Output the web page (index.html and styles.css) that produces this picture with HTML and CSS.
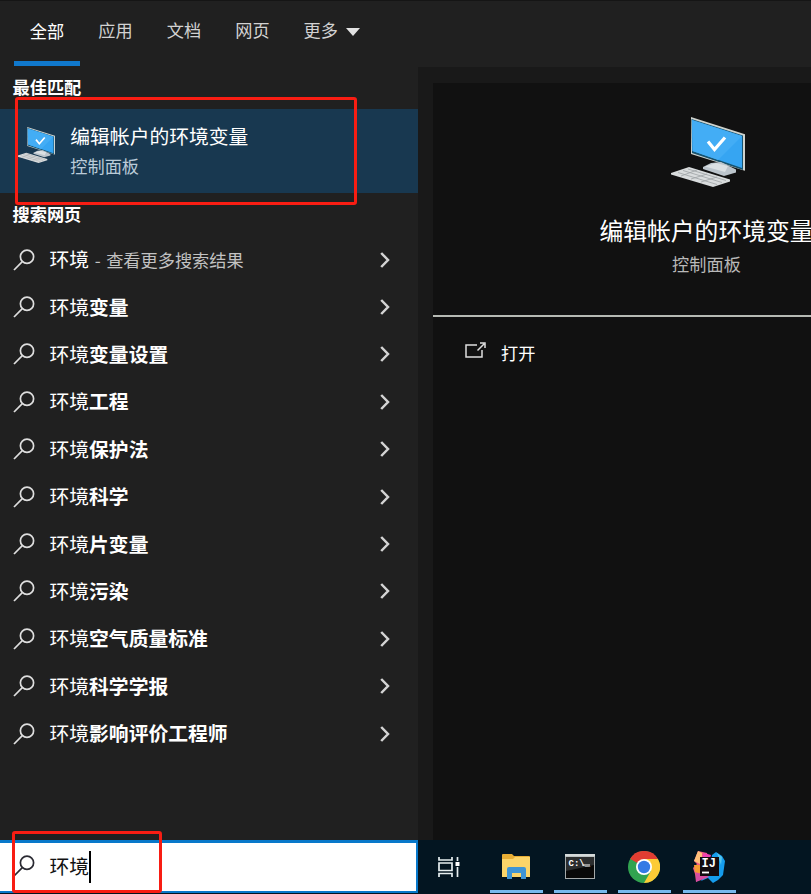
FILE: index.html
```html
<!DOCTYPE html>
<html lang="zh-CN">
<head>
<meta charset="utf-8">
<title>搜索</title>
<link rel="stylesheet" href="styles.css">
</head>
<body>
<svg class="defs" width="0" height="0">
  <symbol id="search" viewBox="0 0 22 22"><circle cx="14" cy="7.8" r="6.6"/><path d="M9.3 12.6 1 21"/></symbol>
  <symbol id="chevron" viewBox="0 0 10 16"><path d="M1.200 1 8 8l-6.800 7"/></symbol>
  <symbol id="pc" viewBox="0 0 74 70">
    <path d="M20 0 75 17.500V54l-2-.6L20 37z" fill="#cfd3ce"/>
    <path d="M20.500 2 72 18.500V53L21 36z" fill="#17536f"/>
    <path d="M21 3 71 19v32L21.500 34z" fill="#36a5f2"/>
    <path d="M21 3 71 19 47 43 21.500 34z" fill="#43adf5"/>
    <path d="M37 24.500 43.500 32.500 54 20.500" fill="none" stroke="#fff" stroke-width="3.200"/>
    <path d="M32 50 40 46l10-1 15 7.500v3L53 59 32 52z" fill="#bcc5cc"/>
    <path d="M34 49.500 45 46l12 3-3 6z" fill="#dbe0e3"/>
    <path d="M0 56 18 50l41 12.500v2L42 70 0 57.500z" fill="#d9dcdd"/>
    <path d="m7 55.500 39 12M12 53.500l39 12M17 52l38 11.500M10 59l16-6M20 62l16-5M30 65l16-5" stroke="#9da2a5" stroke-width=".8" fill="none"/>
  </symbol>
</svg>
<div class="desktop">
  <nav class="tabs">
    <span class="tab active">全部</span><span class="tab">应用</span><span class="tab">文档</span><span class="tab">网页</span><span class="tab more">更多<i class="caret"></i></span>
  </nav>
  <main class="main">
    <section class="results">
      <h2 class="heading">最佳匹配</h2>
      <div class="best">
        <svg class="best-icon"><use href="#pc"/></svg>
        <div class="best-text"><div class="best-title">编辑帐户的环境变量</div><div class="best-sub">控制面板</div></div>
      </div>
      <h2 class="heading web">搜索网页</h2>
      <ul class="list">
        <li><svg class="mag"><use href="#search"/></svg><span class="q">环境<small> - 查看更多搜索结果</small></span><svg class="chev"><use href="#chevron"/></svg></li>
        <li><svg class="mag"><use href="#search"/></svg><span class="q">环境<b>变量</b></span><svg class="chev"><use href="#chevron"/></svg></li>
        <li><svg class="mag"><use href="#search"/></svg><span class="q">环境<b>变量设置</b></span><svg class="chev"><use href="#chevron"/></svg></li>
        <li><svg class="mag"><use href="#search"/></svg><span class="q">环境<b>工程</b></span><svg class="chev"><use href="#chevron"/></svg></li>
        <li><svg class="mag"><use href="#search"/></svg><span class="q">环境<b>保护法</b></span><svg class="chev"><use href="#chevron"/></svg></li>
        <li><svg class="mag"><use href="#search"/></svg><span class="q">环境<b>科学</b></span><svg class="chev"><use href="#chevron"/></svg></li>
        <li><svg class="mag"><use href="#search"/></svg><span class="q">环境<b>片变量</b></span><svg class="chev"><use href="#chevron"/></svg></li>
        <li><svg class="mag"><use href="#search"/></svg><span class="q">环境<b>污染</b></span><svg class="chev"><use href="#chevron"/></svg></li>
        <li><svg class="mag"><use href="#search"/></svg><span class="q">环境<b>空气质量标准</b></span><svg class="chev"><use href="#chevron"/></svg></li>
        <li><svg class="mag"><use href="#search"/></svg><span class="q">环境<b>科学学报</b></span><svg class="chev"><use href="#chevron"/></svg></li>
        <li><svg class="mag"><use href="#search"/></svg><span class="q">环境<b>影响评价工程师</b></span><svg class="chev"><use href="#chevron"/></svg></li>
      </ul>
    </section>
    <section class="detail">
      <div class="card">
        <div class="hero">
          <svg class="hero-icon"><use href="#pc"/></svg>
          <div class="hero-title">编辑帐户的环境变量</div>
          <div class="hero-sub">控制面板</div>
        </div>
        <div class="open">
          <svg class="open-icon" viewBox="0 0 21 16"><path d="M12 3H1v12h16V8M12.500 8.500 19 2M15 1h5v5"/></svg>
          <span>打开</span>
        </div>
      </div>
    </section>
  </main>
  <footer class="taskbar">
    <div class="searchbox"><svg class="mag"><use href="#search"/></svg><span>环境</span><i class="cursor"></i></div>
    <div class="task view">
      <svg width="24" height="22" viewBox="0 0 24 22" fill="none" stroke="#e6eef0" stroke-width="1.700"><path d="M2 1v3h13V1M2 21v-3.500h13V21M2 7h13v7.500H2zM20.500 1v4M20.500 11v10"/><path d="M18.500 6h4v4h-4z" fill="#fff" stroke="none"/></svg>
    </div>
    <div class="task run">
      <svg width="30" height="27" viewBox="0 0 30 27"><path d="M1 2Q1 1 2 1h9l2 2h15q1 0 1 1v20H1z" fill="#e8ae35"/><path d="M1 6h11l2-2h15v20H1z" fill="#fbd469"/><path d="M6 26V16q0-2 2-2h15q2 0 2 2v10h-5v-6h-9v6z" fill="#3f94d4"/></svg>
    </div>
    <div class="task run">
      <svg width="30" height="27" viewBox="0 0 30 27"><path d="M0 1h30v25H0z" fill="#a4a9aa"/><path d="M1 4h28v21H1z" fill="#080808"/><path d="M1 4h28v8L1 18z" fill="#2b2d2e"/><path d="M0 1h30v2.500H0z" fill="#d5dada"/><text class="cmd" x="3.500" y="12.500">C:\_</text><path d="M17 12h8" stroke="#ddd" stroke-width="1.200"/></svg>
    </div>
    <div class="task run">
      <svg width="32" height="32" viewBox="0 0 32 32"><circle cx="16" cy="16" r="16" fill="#31a350"/><path d="M16 16 2.100 8A16 16 0 0 1 29.900 8z" fill="#e13d32"/><path d="M16 8h13.900A16 16 0 0 1 16 32l6.900-12z" fill="#fccb36"/><path d="M2.100 8 9 20l7-4z" fill="#31a350"/><circle cx="16" cy="16" r="8" fill="#fff"/><circle cx="16" cy="16" r="6.200" fill="#347be5"/></svg>
    </div>
    <div class="task run">
      <svg width="32" height="32" viewBox="0 0 32 32"><path d="M5 0 14 2l3 15-14 14-1-8-2-6 4-4-3-3z" fill="#f05a85"/><path d="M5 0 9 2v12l-8-4z" fill="#ffc079"/><path d="M1 14h8v9l-7-2z" fill="#f49a31"/><path d="M11 2 18 4l-2 7H7z" fill="#ee42b3"/><path d="m19 4 4-3 6 4 3 5-2 14-5 5-5 3-5-5-7 3 10-16z" fill="#159ced"/><path d="m24 2 5 4-1 8z" fill="#55c4ec"/><path d="m3 22 9 1 4 3-13 5z" fill="#d64da2"/><path d="M7 6h19v19H7z" fill="#120b10"/><text class="ij" x="8.500" y="16">IJ</text><path d="M9 21.500h7" stroke="#fff" stroke-width="1.800"/></svg>
    </div>
  </footer>
  <div class="mark mark-best"></div>
  <div class="mark mark-search"></div>
</div>
</body>
</html>
```
FILE: styles.css
```css
* { box-sizing: border-box; }
body {
  margin: 0;
  background: #202020;
  color: #fff;
  font-family: "Noto Sans CJK SC", sans-serif;
  font-size: 17.2px;
}
svg { display: block; flex: none; }
.defs { position: absolute; }
.desktop {
  position: relative;
  width: 811px;
  height: 894px;
  overflow: hidden;
  display: flex;
  flex-direction: column;
}
.tabs {
  height: 67px;
  padding-left: 14px;
  display: flex;
  gap: 2.500px;
  border-top: 1px solid #151515;
}
.tab {
  width: 66px;
  height: 65px;
  line-height: 58px;
  text-align: center;
  color: #d2d2d2;
}
.tab.active { color: #fff; line-height: 60px; border-bottom: 5px solid #1078cc; }
.tab.more { width: auto; padding-left: 15.500px; display: flex; }
.caret {
  margin: 27px 0 0 8px;
  width: 0;
  height: 0;
  border: 7px solid transparent;
  border-top: 8px solid #e2e2e2;
  border-bottom: 0;
}
.main { height: 773px; display: flex; }
.results { width: 418px; }
.heading {
  margin: 0;
  height: 42px;
  padding-left: 12.500px;
  font-size: 17.200px;
  line-height: 40px;
  font-weight: 700;
}
.heading.web { height: 43px; line-height: 41px; }
.best {
  height: 84px;
  background: #183850;
  display: flex;
  padding: 18px 0 0 17px;
}
.best-icon { width: 38px; height: 36px; }
.best-text { margin: -1px 0 0 15.300px; }
.best-title { font-size: 19.800px; line-height: 20px; }
.best-sub { margin-top: 10px; line-height: 20px; color: #bacbd8; }
.list { list-style: none; margin: 0; padding: 0; }
.list li {
  height: 47.400px;
  display: flex;
  align-items: center;
  padding: 0 28.500px 0 12.500px;
}
.mag {
  width: 22px;
  height: 22px;
  fill: none;
  stroke: #dedede;
  stroke-width: 1.700;
}
.q { flex: 1; margin: -1px 0 0 15px; font-size: 19.800px; line-height: 26px; white-space: pre; }
.q small { font-size: 17.200px; color: #c2c2c2; word-spacing: 1.700px; }
.chev { width: 10px; height: 16px; fill: none; stroke: #d4d4d4; stroke-width: 2.500; }
.detail {
  width: 393px;
  padding: 16px 0 0 15px;
  background: #191919;
  overflow: hidden;
}
.card { height: 757px; background: #111; }
.hero {
  width: 547px;
  height: 234px;
  padding-top: 34px;
  display: flex;
  flex-direction: column;
  align-items: center;
  border-bottom: 2px solid #b6bab4;
}
.hero-icon { width: 74px; height: 70px; margin-left: 3px; }
.hero-title { margin-top: 27px; font-size: 23.800px; line-height: 32px; }
.hero-sub { margin-top: 5px; line-height: 26px; color: #b9b9b9; }
.open { display: flex; padding: 25px 0 0 31.500px; line-height: 24px; }
.open-icon { width: 21px; height: 16px; fill: none; stroke: #dedede; stroke-width: 1.500; }
.open span { margin: -1px 0 0 15.500px; }
.taskbar { height: 54px; display: flex; background: #031521; }
.searchbox {
  width: 417.500px;
  height: 52.500px;
  border: solid #0878ca;
  border-width: 3px 2px 2px 0;
  background: #fff;
  color: #111;
  display: flex;
  align-items: center;
  padding: 0 0 2px 13px;
  font-size: 19.800px;
}
.searchbox .mag { stroke: #2a2a32; }
.searchbox span { margin-left: 14.500px; }
.cursor { width: 1.500px; height: 32px; margin-top: 2px; background: #000; }
.task {
  width: 53px;
  height: 53px;
  margin-left: 11.300px;
  display: flex;
  align-items: center;
  justify-content: center;
}
.task.view { width: 61px; margin-left: 0; padding-left: 2px; }
.task.run { border-bottom: 3px solid #76b9ed; padding: 3px 1px 0 0; }
.cmd { font: bold 9px "Liberation Mono", monospace; fill: #fff; }
.ij { font: bold 12px "Liberation Mono", monospace; fill: #fff; }
.mark { position: absolute; border: 3px solid #f81d13; border-radius: 3px; }
.mark-best { left: 14.500px; top: 96.500px; width: 342px; height: 108px; }
.mark-search { left: 11.500px; top: 830.500px; width: 150px; height: 62px; }
```
